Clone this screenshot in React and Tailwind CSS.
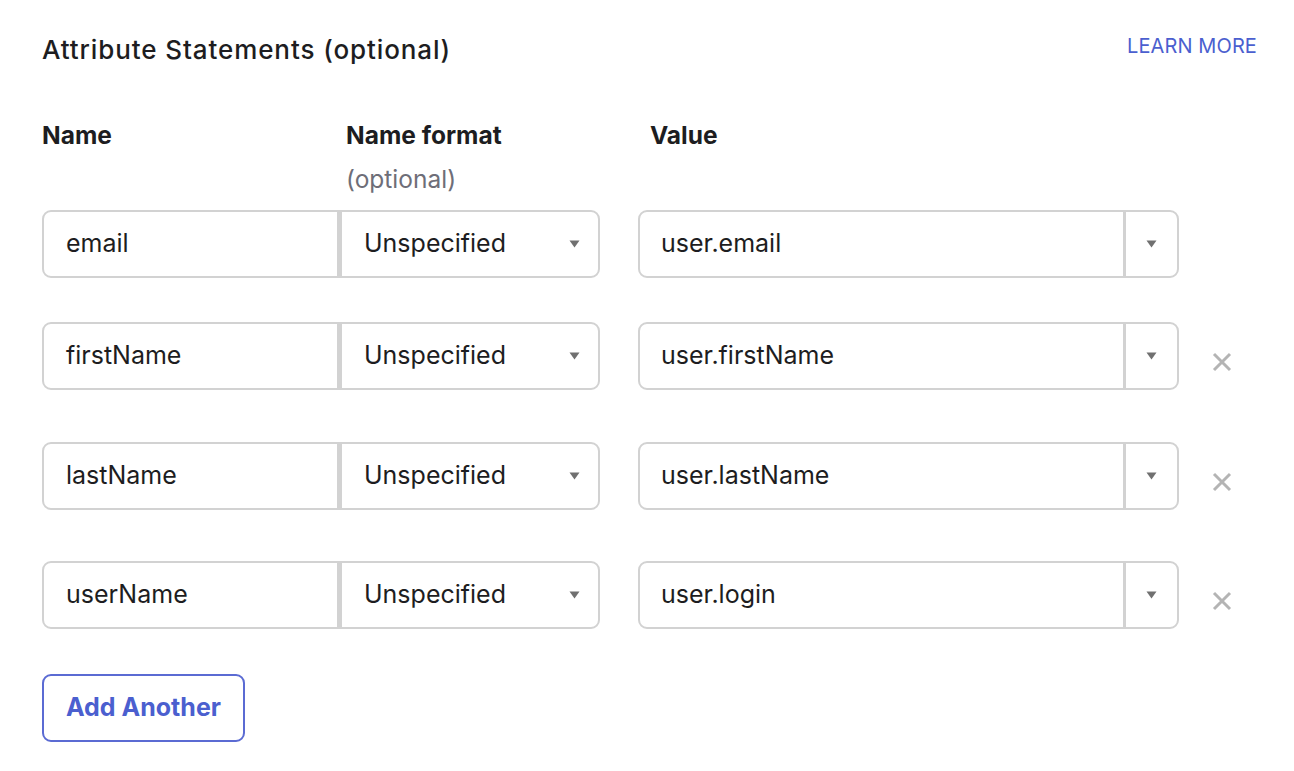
import React from "react";

const rows = [
  { name: "email", value: "user.email", removable: false, mt: "mt-0" },
  { name: "firstName", value: "user.firstName", removable: true, mt: "mt-[44px]" },
  { name: "lastName", value: "user.lastName", removable: true, mt: "mt-[52px]" },
  { name: "userName", value: "user.login", removable: true, mt: "mt-[51px]" },
];

function Caret() {
  return (
    <svg width="11" height="8" viewBox="0 0 11 8" className="shrink-0">
      <path d="M0.5 0.5 L10.5 0.5 L5.5 7.5 Z" fill="#707070" />
    </svg>
  );
}

function XIcon() {
  return (
    <svg width="22" height="22" viewBox="0 0 22 22">
      <path d="M3 3 L19 19 M19 3 L3 19" stroke="#b4b4b4" strokeWidth="3" strokeLinecap="butt" />
    </svg>
  );
}

export default function App() {
  return (
    <div
      className="w-[1294px] h-[771px] bg-white text-[#1d1d21] overflow-hidden"
      style={{ fontFamily: "Inter, 'Noto Sans', sans-serif" }}
    >
      <div className="pl-[42px] pr-[37px] pt-[33px]">
        <div className="flex items-start justify-between">
          <h2 className="text-[26px] leading-[34px] font-medium tracking-[0.9px]">
            Attribute Statements (optional)
          </h2>
          <a className="text-[20px] leading-[28px] text-[#4b5fcf] mt-[-1px] tracking-[0.1px]">LEARN MORE</a>
        </div>

        <div className="mt-[53px] grid grid-cols-[304px_304px_1fr] text-[24.5px] leading-[30px]">
          <div className="font-bold">Name</div>
          <div>
            <div className="font-bold">Name format</div>
            <div className="text-[#6e6e78] font-normal mt-[14px]">(optional)</div>
          </div>
          <div className="font-bold">Value</div>
        </div>

        <div className="mt-[16px]">
          {rows.map((r) => (
            <div key={r.name} className={`flex items-center ${r.mt}`}>
              <div className="flex h-[68px] w-[558px]">
                <div className="flex-1 w-[297px] border-2 border-[#d2d2d2] rounded-l-[9px] flex items-center px-[22px] text-[25px]">
                  {r.name}
                </div>
                <div className="w-[261px] border-2 border-l-[3px] border-[#d2d2d2] rounded-r-[9px] flex items-center justify-between pl-[22px] pr-[18px] text-[25px]">
                  <span>Unspecified</span>
                  <Caret />
                </div>
              </div>
              <div className="ml-[38px] flex h-[68px] w-[541px] border-2 border-[#d2d2d2] rounded-[9px]">
                <div className="flex-1 flex items-center px-[21px] text-[25px] border-r-[3px] border-[#d2d2d2]">
                  {r.value}
                </div>
                <div className="w-[51px] flex items-center justify-center">
                  <Caret />
                </div>
              </div>
              {r.removable && (
                <div className="ml-[32px] mt-[12px] flex items-center">
                  <XIcon />
                </div>
              )}
            </div>
          ))}
        </div>

        <button className="mt-[45px] h-[68px] w-[203px] border-2 border-[#5b6bd3] rounded-[9px] text-[25px] font-bold text-[#4b5fcf] flex items-center justify-center">
          Add Another
        </button>
      </div>
    </div>
  );
}
